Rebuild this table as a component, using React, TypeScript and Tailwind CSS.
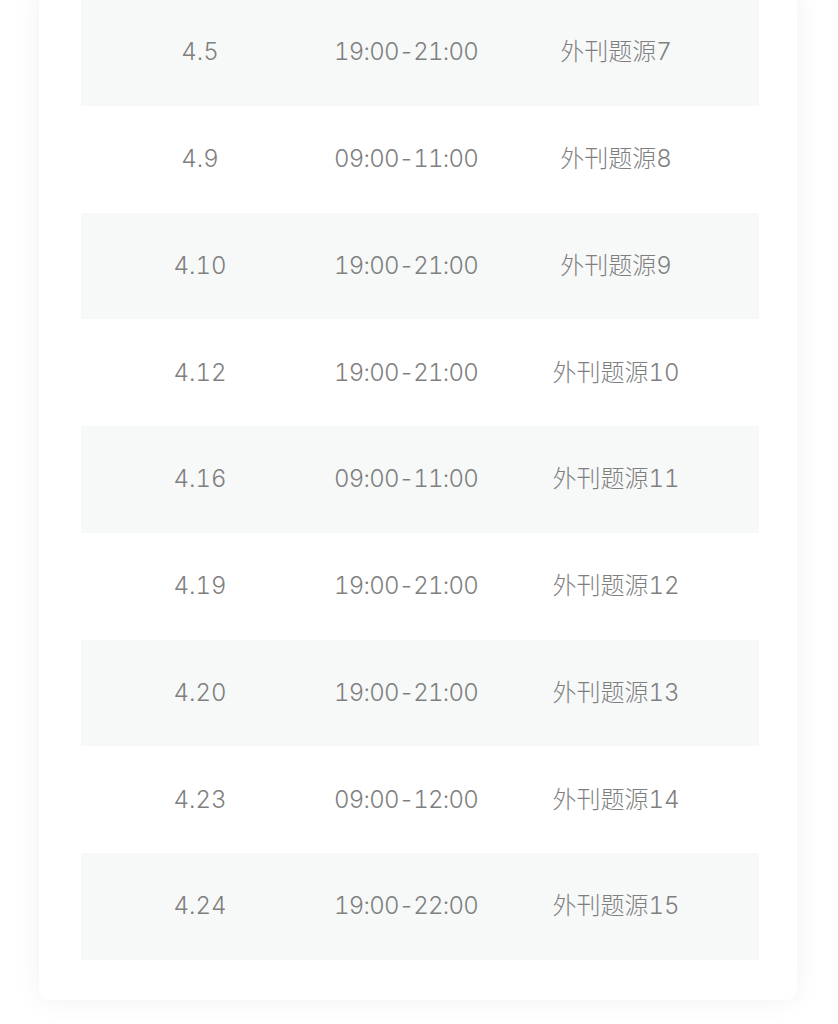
const rows = [
  { date: "4.5", time: "19:00-21:00", source: "外刊题源7" },
  { date: "4.9", time: "09:00-11:00", source: "外刊题源8" },
  { date: "4.10", time: "19:00-21:00", source: "外刊题源9" },
  { date: "4.12", time: "19:00-21:00", source: "外刊题源10" },
  { date: "4.16", time: "09:00-11:00", source: "外刊题源11" },
  { date: "4.19", time: "19:00-21:00", source: "外刊题源12" },
  { date: "4.20", time: "19:00-21:00", source: "外刊题源13" },
  { date: "4.23", time: "09:00-12:00", source: "外刊题源14" },
  { date: "4.24", time: "19:00-22:00", source: "外刊题源15" },
]

export default function App() {
  return (
    <div
      className="min-h-[1024px] w-[838px] overflow-hidden bg-white"
      style={{ fontFamily: 'Inter, "Noto Sans CJK SC", sans-serif' }}
    >
      {/* Schedule card */}
      <div className="ml-[39px] mr-[41px] -mt-[14px] rounded-b-[12px] bg-white pl-[42px] pr-[38px] pt-[13px] pb-[40px] shadow-[0_0_28px_rgba(0,0,0,0.06)]">
        {rows.map((row, i) => (
          <div
            key={row.date}
            className={`grid h-[106.75px] grid-cols-[238px_174px_246px_1fr] items-center text-[24px] font-light tabular-nums text-[#7f7f7f] ${
              i % 2 === 0 ? "bg-[#f7f9f9]" : "bg-white"
            }`}
          >
            <span className="text-center">{row.date}</span>
            <span className="text-center tracking-[-0.8px]">{row.time}</span>
            <span className="text-center">{row.source}</span>
            <span />
          </div>
        ))}
      </div>
    </div>
  )
}
